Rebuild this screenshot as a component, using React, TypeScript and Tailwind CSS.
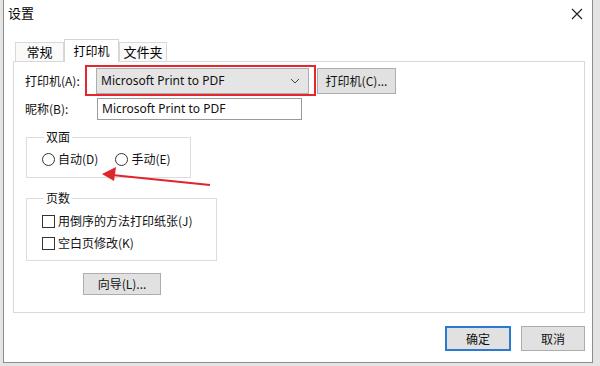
import React from 'react';

const cjk = { fontFamily: '"Noto Sans CJK SC", "Noto Sans", sans-serif' };
const latin = { fontFamily: '"Noto Sans", "Noto Sans CJK SC", sans-serif' };

const Radio = ({ label }: { label: string }) => (
  <div className="flex items-center">
    <span className="w-[13px] h-[13px] rounded-full border border-[#333] bg-white" />
    <span className="ml-[3px] text-[12px] text-[#111]">{label}</span>
  </div>
);

const Check = ({ label }: { label: string }) => (
  <div className="flex items-center h-[22px]">
    <span className="w-[13px] h-[13px] border border-[#333] bg-white" />
    <span className="ml-[3px] text-[12px] text-[#111]">{label}</span>
  </div>
);

const Tab = ({ label, active, w }: { label: string; active?: boolean; w: string }) =>
  active ? (
    <div className={`relative z-10 -mb-px h-[23px] ${w} flex items-center justify-center border border-b-0 border-[#d4d4d4] bg-white text-[12px]`}>
      {label}
    </div>
  ) : (
    <div className={`h-[19px] ${w} flex items-center justify-center border border-b-0 border-[#d9d9d9] bg-[#fafafa] text-[13px]`}>
      {label}
    </div>
  );

export default function App() {
  return (
    <div className="relative w-[600px] h-[366px] bg-[#e4e4e4] overflow-hidden" style={cjk}>
      <div className="ml-[3px] w-[590px] h-[363px] bg-white border-x border-b border-[#8c8c8c] flex flex-col">
        {/* title bar */}
        <div className="h-[38px] flex items-start justify-between pl-[4px] pr-[8px] pt-[5px]">
          <span className="text-[13px] text-black leading-[16px]">设置</span>
          <svg width="14" height="14" viewBox="0 0 14 14" className="mt-[2px]">
            <path d="M2 2 L12 12 M12 2 L2 12" stroke="#222" strokeWidth="1.2" />
          </svg>
        </div>

        {/* tabs */}
        <div className="pl-[11px] flex items-end h-[23px]">
          <Tab label="常规" w="w-[49px]" />
          <Tab label="打印机" active w="w-[55px]" />
          <Tab label="文件夹" w="w-[48px]" />
        </div>

        {/* tab panel */}
        <div className="ml-[9px] w-[572px] h-[252px] border border-[#d9d9d9] bg-white pt-[5px] pl-[11px]">
          {/* printer row */}
          <div className="flex items-center h-[27px]">
            <span className="w-[71px] text-[12px] text-[#111]">打印机(A):</span>
            <div className="relative">
              <div className="w-[213px] h-[26px] bg-[#e5e5e5] border border-[#adadad] flex items-center justify-between pl-[4px] pr-[8px]">
                <span className="text-[12px] text-[#111]" style={latin}>Microsoft Print to PDF</span>
                <svg width="10" height="6" viewBox="0 0 10 6">
                  <path d="M1 1 L5 5 L9 1" fill="none" stroke="#444" strokeWidth="1" />
                </svg>
              </div>
              <div className="absolute -left-[11px] -top-[3px] w-[231px] h-[31px] border-2 border-[#e5262c]" />
            </div>
            <button className="ml-[8px] w-[79px] h-[26px] bg-[#e1e1e1] border border-[#adadad] text-[12px] text-[#111]">
              打印机(C)...
            </button>
          </div>

          {/* nickname row */}
          <div className="flex items-center mt-[4px] h-[22px]">
            <span className="w-[72px] text-[12px] text-[#111]">昵称(B):</span>
            <div className="w-[205px] h-[22px] border border-[#9a9a9a] flex items-center pl-[4px]">
              <span className="text-[12px] text-[#111]" style={latin}>Microsoft Print to PDF</span>
            </div>
          </div>

          {/* duplex group */}
          <fieldset className="mt-[10px] ml-px w-[165px] h-[48px] border border-[#dcdcdc] pl-[15px] pr-2">
            <legend className="ml-[2px] px-[2px] text-[12px] text-[#111] leading-[14px]">双面</legend>
            <div className="flex items-center gap-[17px] mt-[6px]">
              <Radio label="自动(D)" />
              <Radio label="手动(E)" />
            </div>
          </fieldset>

          {/* pages group */}
          <fieldset className="mt-[13px] ml-px w-[191px] h-[70px] border border-[#dcdcdc] pl-[15px]">
            <legend className="ml-[2px] px-[2px] text-[12px] text-[#111] leading-[14px]">页数</legend>
            <div className="mt-[5px] flex flex-col">
              <Check label="用倒序的方法打印纸张(J)" />
              <Check label="空白页修改(K)" />
            </div>
          </fieldset>

          <button className="mt-[12px] ml-[58px] w-[78px] h-[22px] bg-[#e1e1e1] border border-[#adadad] text-[12px] text-[#111]">
            向导(L)...
          </button>
        </div>

        {/* footer buttons */}
        <div className="flex justify-end gap-[10px] pr-[7px] mt-[13px]">
          <button className="w-[66px] h-[25px] bg-[#e1e1e1] border-2 border-[#2a7ad4] text-[12px] text-[#111]">
            确定
          </button>
          <button className="w-[64px] h-[25px] bg-[#e1e1e1] border border-[#adadad] text-[12px] text-[#111]">
            取消
          </button>
        </div>
      </div>

      {/* annotation arrow */}
      <svg className="absolute left-0 top-0 pointer-events-none" width="600" height="366">
        <line x1="210" y1="185" x2="112" y2="175" stroke="#e0262a" strokeWidth="2" />
        <path d="M102 174 L116 167 L114 181 Z" fill="#e0262a" />
      </svg>
    </div>
  );
}
